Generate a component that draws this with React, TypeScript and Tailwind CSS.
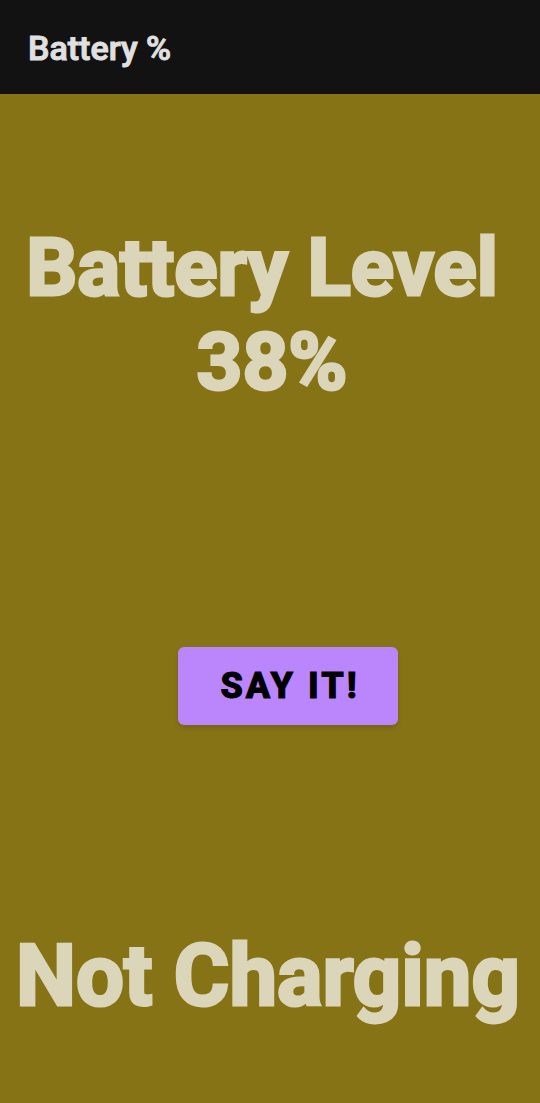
export default function App() {
  return (
    <div className="flex min-h-screen flex-col bg-[#867316] font-['Roboto',sans-serif]">
      <header className="flex h-[94px] items-center bg-[#121212] px-7 pt-0.5">
        <h1 className="text-[34px] leading-10 font-medium text-[#e0e0e0] [-webkit-text-stroke:1px_#e0e0e0]">
          Battery %
        </h1>
      </header>
      <main className="flex flex-1 flex-col items-center pt-[127px] pb-[77px]">
        <p className="pl-1 text-center text-[80px] leading-[94px] font-bold text-[#dbd5b9] [-webkit-text-stroke:3px_#dbd5b9]">
          Battery Level&nbsp;
          <br />
          38%
        </p>
        <div className="flex flex-1 items-center pt-9 pl-9">
          <button
            type="button"
            className="h-[78px] rounded-md bg-[#bb86fc] pr-[38px] pl-[42px] text-[36px] font-extrabold tracking-[3px] text-black shadow-md [-webkit-text-stroke:1px_#000]"
          >
            SAY IT!
          </button>
        </div>
        <p className="pr-1 text-center text-[85px] leading-[100px] font-bold whitespace-nowrap text-[#dbd5b9] [-webkit-text-stroke:3px_#dbd5b9]">
          Not Charging
        </p>
      </main>
    </div>
  );
}
